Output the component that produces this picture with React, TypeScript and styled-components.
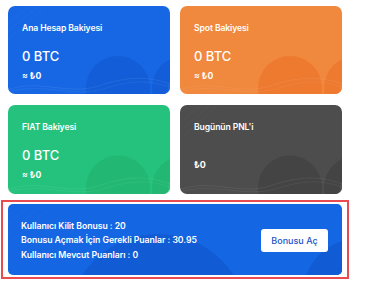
import React from "react";
import styled, { createGlobalStyle } from "styled-components";

const GlobalStyle = createGlobalStyle`
  html, body {
    margin: 0;
    padding: 0;
    background: #ffffff;
  }
  body {
    font-family: "Inter", "Noto Sans", sans-serif;
  }
`;

const Page = styled.div`
  width: 334px;
  padding: 6px 8px;
`;

const Grid = styled.div`
  display: grid;
  grid-template-columns: 1fr 1fr;
  column-gap: 10px;
  row-gap: 11px;
`;

const Card = styled.div<{ $bg: string; $shade: string; $h: number }>`
  position: relative;
  overflow: hidden;
  height: ${(p) => p.$h}px;
  border-radius: 7px;
  background: ${(p) => p.$bg};
  color: #ffffff;
  padding: 16px 14px 0;
  box-sizing: border-box;
  --shade: ${(p) => p.$shade};
`;

const Content = styled.div`
  position: relative;
  z-index: 1;
  display: flex;
  flex-direction: column;
`;

const Title = styled.div`
  font-size: 8.6px;
  font-weight: 600;
  letter-spacing: -0.1px;
  line-height: 12px;
`;

const Amount = styled.div`
  margin-top: 14px;
  font-size: 13px;
  font-weight: 500;
  line-height: 16px;
`;

const Approx = styled.div`
  margin-top: 6px;
  font-size: 8.6px;
  font-weight: 700;
  line-height: 12px;
`;

const Pnl = styled.div`
  margin-top: 26px;
  font-size: 9px;
  font-weight: 700;
  line-height: 12px;
`;

const Deco = styled.svg`
  position: absolute;
  inset: 0;
  width: 100%;
  height: 100%;
  pointer-events: none;
`;

const BonusFrame = styled.div`
  margin: 6px -7px 0;
  border: 2px solid #e84b50;
  padding: 2px 5px;
`;

const BonusBox = styled.div`
  position: relative;
  overflow: hidden;
  height: 71px;
  border-radius: 5px;
  background: #1466e3;
  color: #ffffff;
  display: flex;
  align-items: center;
  justify-content: space-between;
  padding: 0 14px 0 13px;
  box-sizing: border-box;
  --shade: #115bd4;
`;

const Lines = styled.div`
  position: relative;
  z-index: 1;
  display: flex;
  flex-direction: column;
  gap: 2.5px;
  padding-top: 1px;
`;

const Line = styled.div`
  font-size: 8.7px;
  font-weight: 600;
  line-height: 12px;
  letter-spacing: -0.05px;
`;

const Button = styled.button`
  position: relative;
  z-index: 1;
  width: 67px;
  height: 23px;
  border: none;
  border-radius: 3px;
  background: #ffffff;
  color: #2452c9;
  font-family: "Inter", "Noto Sans", sans-serif;
  font-size: 9px;
  font-weight: 500;
  padding: 0;
  margin-top: 2px;
`;

const Decoration = () => (
  <Deco viewBox="0 0 162 88" preserveAspectRatio="none">
    <circle cx="110" cy="82" r="32" fill="var(--shade)" />
    <circle cx="176" cy="82" r="32" fill="var(--shade)" />
    <circle cx="176" cy="82" r="16" fill="rgba(255,255,255,0.05)" />
    <path
      d="M0 84 C30 72 60 90 90 80 S140 70 162 78"
      stroke="rgba(255,255,255,0.12)"
      strokeWidth="0.6"
      fill="none"
    />
    <path
      d="M0 86 C35 76 65 92 95 83 S140 74 162 81"
      stroke="rgba(255,255,255,0.1)"
      strokeWidth="0.6"
      fill="none"
    />
    <path
      d="M0 18 L22 0 M0 26 L30 0 M0 34 L38 0"
      stroke="rgba(255,255,255,0.05)"
      strokeWidth="0.6"
    />
  </Deco>
);

const BonusDecoration = () => (
  <Deco viewBox="0 0 334 71" preserveAspectRatio="none">
    <circle cx="150" cy="120" r="90" fill="var(--shade)" />
    <circle cx="350" cy="90" r="55" fill="var(--shade)" />
    <path
      d="M0 20 L24 0 M0 30 L36 0 M0 40 L48 0"
      stroke="rgba(255,255,255,0.05)"
      strokeWidth="0.6"
    />
  </Deco>
);

const cards = [
  { title: "Ana Hesap Bakiyesi", amount: "0 BTC", approx: "≈ ₺0", bg: "#1767e4", shade: "#135ed8", h: 88 },
  { title: "Spot Bakiyesi", amount: "0 BTC", approx: "≈ ₺0", bg: "#f0883d", shade: "#ee7a30", h: 88 },
  { title: "FIAT Bakiyesi", amount: "0 BTC", approx: "≈ ₺0", bg: "#25c27d", shade: "#22b873", h: 89 },
  { title: "Bugünün PNL'i", approx: "₺0", bg: "#4d4d4d", shade: "#444444", h: 89 },
];

export default function App() {
  return (
    <>
      <GlobalStyle />
      <Page>
        <Grid>
          {cards.map((c) => (
            <Card key={c.title} $bg={c.bg} $shade={c.shade} $h={c.h}>
              <Decoration />
              <Content>
                <Title>{c.title}</Title>
                {c.amount ? (
                  <>
                    <Amount>{c.amount}</Amount>
                    <Approx>{c.approx}</Approx>
                  </>
                ) : (
                  <Pnl>{c.approx}</Pnl>
                )}
              </Content>
            </Card>
          ))}
        </Grid>
        <BonusFrame>
          <BonusBox>
            <BonusDecoration />
            <Lines>
              <Line>Kullanıcı Kilit Bonusu : 20</Line>
              <Line>Bonusu Açmak İçin Gerekli Puanlar : 30.95</Line>
              <Line>Kullanıcı Mevcut Puanları : 0</Line>
            </Lines>
            <Button>Bonusu Aç</Button>
          </BonusBox>
        </BonusFrame>
      </Page>
    </>
  );
}
